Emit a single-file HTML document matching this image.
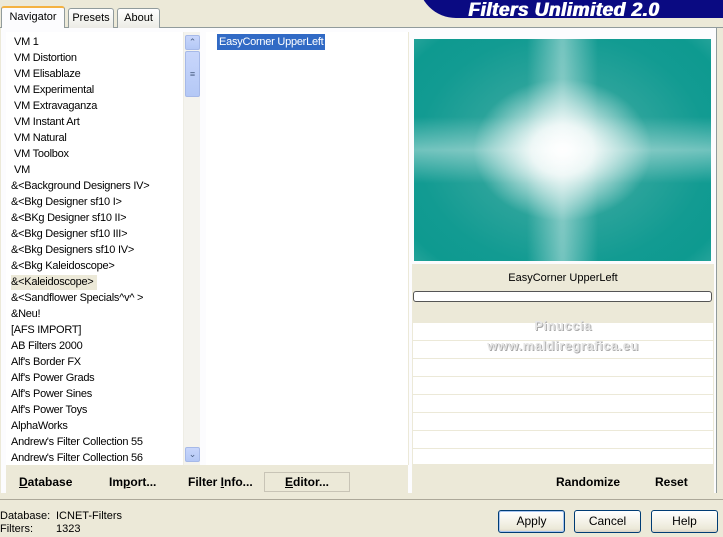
<!DOCTYPE html>
<html><head><meta charset="utf-8"><style>
*{margin:0;padding:0;box-sizing:border-box}
body{width:723px;height:537px;background:#ece9d8;font-family:"Liberation Sans",Tahoma,sans-serif;font-size:11px;color:#000;position:relative;overflow:hidden}
.abs{position:absolute}
.tab{position:absolute;top:8px;height:20px;border:1px solid #919b9c;border-bottom:none;border-radius:3px 3px 0 0;background:linear-gradient(#fff,#ecebe5);font-size:11px;text-align:center;line-height:18px}
.banner{position:absolute;left:418px;top:-20px;width:320px;height:38px;background:#0a0a82;border-radius:0 0 0 40px}
.banner span{position:absolute;left:50px;top:20px;color:#fff;font-weight:bold;font-style:italic;font-size:19px;letter-spacing:0.5px;text-shadow:1px 0 0 #fff}
.list{position:absolute;left:6px;top:32px;width:177px;height:433px;background:#fff;letter-spacing:-0.25px}
.list div{height:16px;line-height:16px;white-space:nowrap}
.sb{position:absolute;left:183px;top:32px;width:17px;height:433px;background:#f4f3ee;border-left:1px solid #eeede5}
.sbtn{position:absolute;left:1px;width:15px;height:15px;background:linear-gradient(#c8d6fb,#b4c8f6);border:1px solid #a6b9e8;border-radius:2px;color:#4d6185;font-size:9px;text-align:center;line-height:13px}
.mid{position:absolute;left:206px;top:32px;width:202px;height:433px;background:#fff}
.prev{position:absolute;left:414px;top:39px;width:297px;height:222px;
background:
linear-gradient(90deg,rgba(255,255,255,0) 38%,rgba(255,255,255,.4) 49.5%,rgba(255,255,255,.4) 50.5%,rgba(255,255,255,0) 62%),
linear-gradient(0deg,rgba(255,255,255,0) 35%,rgba(255,255,255,.4) 50%,rgba(255,255,255,0) 65%),
radial-gradient(ellipse 30% 32% at 50% 50%,#fff 0%,rgba(255,255,255,.85) 35%,rgba(255,255,255,0) 100%),
radial-gradient(ellipse 70% 75% at 50% 50%,#4fb0a8 0%,#129b92 70%,#0e9a90 88%,#2aa59c 100%);}
.row{position:absolute;left:413px;width:300px;background:#fff;height:17px}
.btn{position:absolute;height:23px;border:1px solid #003c74;border-radius:3px;background:linear-gradient(#fff,#ece9d8 85%,#d6d0c5);text-align:center;line-height:21px;font-size:12px}
.b{font-weight:bold;font-size:12px;position:absolute;top:475px}
</style></head><body>
<div class="banner"><span>Filters Unlimited 2.0</span></div>
<div class="abs" style="left:0;top:27px;width:723px;height:1px;background:#919b9c"></div>
<div class="tab" style="left:68px;width:46px">Presets</div>
<div class="tab" style="left:117px;width:43px">About</div>
<div class="tab" style="left:1px;top:6px;width:64px;height:23px;background:#fcfcfe;border-top:2px solid #f4b242;line-height:18px">Navigator</div>
<div class="abs" style="left:1px;top:28px;width:716px;height:465px;background:#fcfcfe;border-right:1px solid #919b9c"></div>
<div class="abs" style="left:6px;top:465px;width:402px;height:28px;background:#ece9d8"></div>
<div class="abs" style="left:412px;top:264px;width:302px;height:229px;background:#ece9d8"></div>
<div class="list">
<div style="padding-left:8px;margin-top:2px">VM 1</div><div style="padding-left:8px">VM Distortion</div><div style="padding-left:8px">VM Elisablaze</div><div style="padding-left:8px">VM Experimental</div><div style="padding-left:8px">VM Extravaganza</div><div style="padding-left:8px">VM Instant Art</div><div style="padding-left:8px">VM Natural</div><div style="padding-left:8px">VM Toolbox</div><div style="padding-left:8px">VM</div>
<div style="padding-left:5px">&amp;&lt;Background Designers IV&gt;</div><div style="padding-left:5px">&amp;&lt;Bkg Designer sf10 I&gt;</div><div style="padding-left:5px">&amp;&lt;BKg Designer sf10 II&gt;</div><div style="padding-left:5px">&amp;&lt;Bkg Designer sf10 III&gt;</div><div style="padding-left:5px">&amp;&lt;Bkg Designers sf10 IV&gt;</div><div style="padding-left:5px">&amp;&lt;Bkg Kaleidoscope&gt;</div><div style="padding-left:5px"><span style="background:#ece9d8;padding:1px 4px 2px 0">&amp;&lt;Kaleidoscope&gt;</span></div><div style="padding-left:5px">&amp;&lt;Sandflower Specials^v^ &gt;</div><div style="padding-left:5px">&amp;Neu!</div><div style="padding-left:5px">[AFS IMPORT]</div><div style="padding-left:5px">AB Filters 2000</div><div style="padding-left:5px">Alf's Border FX</div><div style="padding-left:5px">Alf's Power Grads</div><div style="padding-left:5px">Alf's Power Sines</div><div style="padding-left:5px">Alf's Power Toys</div><div style="padding-left:5px">AlphaWorks</div><div style="padding-left:5px">Andrew's Filter Collection 55</div><div style="padding-left:5px">Andrew's Filter Collection 56</div>
</div>
<div class="sb"><div class="sbtn" style="top:3px">&#8963;</div><div class="sbtn" style="top:19px;height:46px;line-height:44px">&#8801;</div><div class="sbtn" style="top:415px">&#8964;</div></div>
<div class="mid"><span style="position:absolute;left:11px;top:2px;background:#316ac5;color:#fff;padding:1px 2px;line-height:14px;letter-spacing:-0.25px">EasyCorner UpperLeft</span></div>
<div class="abs" style="left:408px;top:32px;width:1px;height:433px;background:#ece9d8"></div>
<div class="prev"></div>
<div class="abs" style="left:413px;top:272px;width:300px;text-align:center">EasyCorner UpperLeft</div>
<div class="abs" style="left:413px;top:291px;width:299px;height:11px;border:1px solid #555;border-radius:3px;background:#fff"></div>
<div class="row" style="top:323px"></div><div class="row" style="top:341px"></div><div class="row" style="top:359px"></div><div class="row" style="top:377px"></div><div class="row" style="top:395px"></div><div class="row" style="top:413px"></div><div class="row" style="top:431px"></div><div class="row" style="top:449px;height:15px"></div>
<div class="abs" style="left:413px;top:316px;width:300px;text-align:center;color:#e6e6e6;font-weight:bold;font-size:13px;line-height:20px;letter-spacing:0.5px;text-shadow:1px 1px 0 #aaa">Pinuccia<br>www.maldiregrafica.eu</div>
<div class="b" style="left:19px"><u>D</u>atabase</div>
<div class="b" style="left:109px">Im<u>p</u>ort...</div>
<div class="b" style="left:188px">Filter <u>I</u>nfo...</div>
<div class="abs" style="left:264px;top:472px;width:86px;height:20px;border:1px solid #c8c4b6;background:#ece9d8"></div>
<div class="b" style="left:285px"><u>E</u>ditor...</div>
<div class="b" style="left:556px">Randomize</div>
<div class="b" style="left:655px">Reset</div>
<div class="abs" style="left:0;top:499px;width:723px;height:1px;background:#aca899"></div>
<div class="abs" style="left:0;top:510px;line-height:13px">Database:<br>Filters:</div>
<div class="abs" style="left:56px;top:510px;line-height:13px">ICNET-Filters<br>1323</div>
<div class="btn" style="left:498px;top:510px;width:67px;box-shadow:inset 0 0 0 1px #a6c4f1">Apply</div>
<div class="btn" style="left:574px;top:510px;width:67px">Cancel</div>
<div class="btn" style="left:651px;top:510px;width:67px">Help</div>
</body></html>
